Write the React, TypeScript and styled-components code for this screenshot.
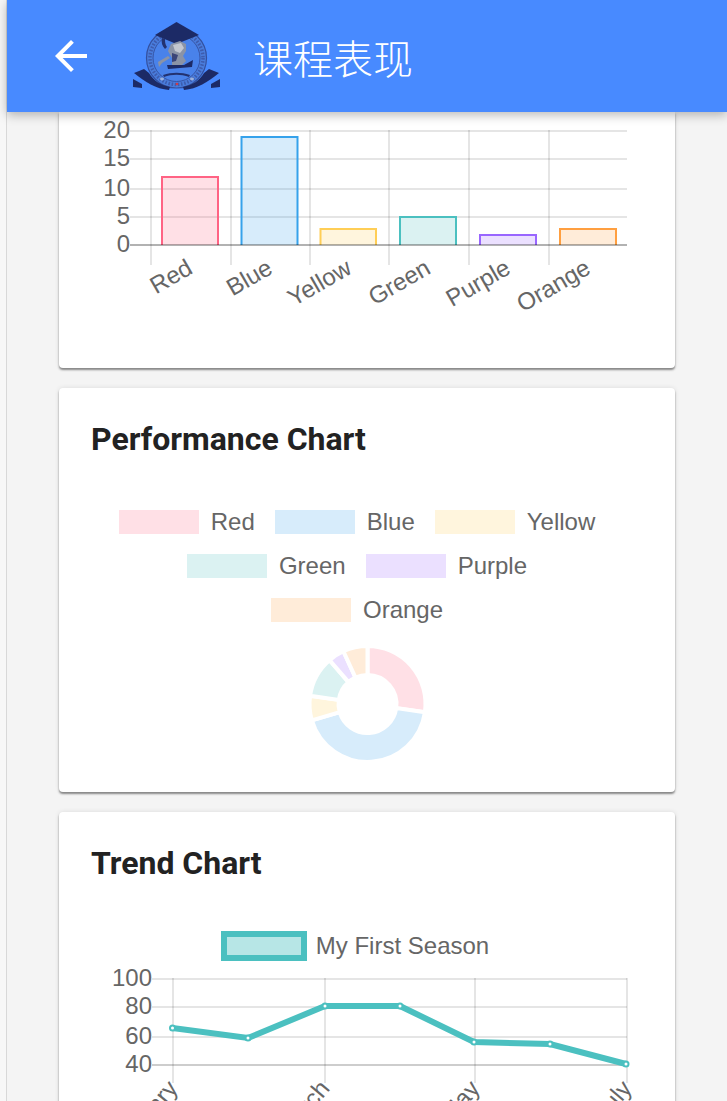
import { createGlobalStyle, styled } from 'styled-components';
import { MdArrowBack } from 'react-icons/md';

const GlobalStyle = createGlobalStyle`
  html, body {
    margin: 0;
    padding: 0;
    height: 1101px;
    overflow: hidden;
    background: #f4f4f4;
    font-family: Roboto, "Liberation Sans", sans-serif;
  }
`;

const Shell = styled.div`
  display: flex;
  height: 1101px;
  overflow: hidden;
`;

const Gutter = styled.div`
  width: 6px;
  flex: none;
  background: #f7f7f7;
  border-right: 1px solid #d8d8d8;
`;

const Page = styled.div`
  flex: 1;
  min-width: 0;
  display: flex;
  flex-direction: column;
`;

const Header = styled.header`
  flex: none;
  position: relative;
  z-index: 2;
  height: 112px;
  display: flex;
  align-items: center;
  background: #488aff;
  box-shadow: 0 3px 10px rgba(0, 0, 0, 0.28);
  color: #fff;
`;

const BackButton = styled.button`
  display: flex;
  padding: 0;
  margin-left: 40px;
  border: 0;
  background: none;
  color: #fff;
`;

const Logo = styled.svg`
  width: 92px;
  height: 74px;
  margin-left: 35px;
`;

const Title = styled.h1`
  margin: 2px 0 0 31px;
  font-family: "Noto Sans CJK SC", sans-serif;
  font-size: 40px;
  font-weight: 300;
  line-height: 1;
`;

const Content = styled.main`
  display: flex;
  flex-direction: column;
  gap: 20px;
  padding: 0 52px;
`;

const Card = styled.section`
  flex: none;
  background: #fff;
  border-radius: 4px;
  padding: 32px;
  box-shadow: 0 2px 2px rgba(0, 0, 0, 0.42), 0 0 5px rgba(0, 0, 0, 0.1);
`;

const TopCard = styled(Card)`
  padding-top: 0;
  border-radius: 0 0 4px 4px;
`;

const CardTitle = styled.h2`
  margin: 0;
  font-size: 32px;
  line-height: 38px;
  font-weight: 700;
  color: #222;
`;

const Chart = styled.svg`
  display: block;
  width: 552px;
  overflow: visible;
`;

const DoughnutFrame = styled(Chart)`
  margin-top: 12px;
`;

const LineFrame = styled(Chart)`
  margin-top: 4px;
`;

const ChartLabel = styled.text`
  font-family: "Liberation Sans", Arial, sans-serif;
  font-size: 24px;
  fill: #666;
`;

const Legend = styled.div`
  display: flex;
  flex-wrap: wrap;
  justify-content: center;
  width: 530px;
  margin: 42px auto 0;
`;

const LegendItem = styled.div`
  display: flex;
  align-items: center;
  height: 44px;
  margin-right: 20px;
  font-family: "Liberation Sans", Arial, sans-serif;
  font-size: 24px;
  color: #666;
`;

const Swatch = styled.span<{ $rgb: string }>`
  width: 80px;
  height: 24px;
  margin-right: 12px;
  background: rgba(${(p) => p.$rgb}, 0.2);
`;

const LineLegend = styled.div`
  display: flex;
  align-items: center;
  justify-content: center;
  gap: 9px;
  height: 30px;
  margin-top: 49px;
  padding-right: 24px;
  font-family: "Liberation Sans", Arial, sans-serif;
  font-size: 24px;
  color: #666;
`;

const LineSwatch = styled.span`
  box-sizing: border-box;
  width: 86px;
  height: 30px;
  border: 6px solid #4bc0c0;
  background: rgba(75, 192, 192, 0.4);
`;

const series = [
  { name: 'Red', rgb: '255, 99, 132', value: 12, x: 162, w: 56, top: 177 },
  { name: 'Blue', rgb: '54, 162, 235', value: 19, x: 241.5, w: 56, top: 137 },
  { name: 'Yellow', rgb: '255, 206, 86', value: 3, x: 320.5, w: 55.5, top: 229 },
  { name: 'Green', rgb: '75, 192, 192', value: 5, x: 400, w: 56, top: 217 },
  { name: 'Purple', rgb: '153, 102, 255', value: 2, x: 480, w: 56, top: 235 },
  { name: 'Orange', rgb: '255, 159, 64', value: 3, x: 560, w: 56, top: 229 },
];

const barGridX = [151, 231, 310, 389, 469, 549];
const barGridY = [131, 159, 189, 217];
const barTicks = [
  { label: '20', y: 132 },
  { label: '15', y: 160 },
  { label: '10', y: 190 },
  { label: '5', y: 218 },
  { label: '0', y: 246 },
];

const BarChart = () => (
  <Chart viewBox="91 112 552 224" height="224">
    {barGridY.map((y) => (
      <line key={y} x1="130" x2="627" y1={y} y2={y} stroke="rgba(0,0,0,0.1)" strokeWidth="2" />
    ))}
    {barGridX.map((x) => (
      <line key={x} x1={x} x2={x} y1="130" y2="265" stroke="rgba(0,0,0,0.1)" strokeWidth="2" />
    ))}
    {series.map((s) => (
      <g key={s.name}>
        <rect x={s.x} y={s.top} width={s.w} height={245 - s.top} fill={`rgba(${s.rgb},0.2)`} />
        <path
          d={`M${s.x} 245V${s.top}H${s.x + s.w}V245`}
          fill="none"
          stroke={`rgb(${s.rgb})`}
          strokeWidth="2"
        />
      </g>
    ))}
    <line x1="130" x2="627" y1="245" y2="245" stroke="rgba(0,0,0,0.3)" strokeWidth="2" />
    {barTicks.map((t) => (
      <ChartLabel key={t.label} x="130" y={t.y} textAnchor="end" dominantBaseline="middle">
        {t.label}
      </ChartLabel>
    ))}
    {series.map((s, i) => (
      <ChartLabel
        key={s.name}
        textAnchor="end"
        transform={`translate(${barGridX[i] + 40} 267) rotate(-30)`}
        dominantBaseline="middle"
      >
        {s.name}
      </ChartLabel>
    ))}
  </Chart>
);

const arcPath = (from: number, to: number, R: number, r: number, cx: number, cy: number) => {
  const pt = (a: number, rad: number) =>
    `${(cx + rad * Math.sin(a)).toFixed(2)} ${(cy - rad * Math.cos(a)).toFixed(2)}`;
  const large = to - from > Math.PI ? 1 : 0;
  return `M${pt(from, R)}A${R} ${R} 0 ${large} 1 ${pt(to, R)}L${pt(to, r)}A${r} ${r} 0 ${large} 0 ${pt(from, r)}Z`;
};

const DoughnutChart = () => {
  const total = series.reduce((sum, s) => sum + s.value, 0);
  let angle = 0;
  return (
    <DoughnutFrame viewBox="91 644 552 116" height="116">
      {series.map((s) => {
        const from = angle;
        angle += (s.value / total) * Math.PI * 2;
        return (
          <path
            key={s.name}
            d={arcPath(from, angle, 58, 29, 367.5, 704)}
            fill={`rgba(${s.rgb},0.2)`}
            stroke="#fff"
            strokeWidth="4"
          />
        );
      })}
    </DoughnutFrame>
  );
};

const linePoints = [
  [172.5, 1028],
  [248, 1038],
  [325, 1006],
  [400, 1006],
  [474, 1042],
  [550, 1044],
  [626, 1064],
];
const lineGridY = [979, 1007, 1037, 1065];
const lineGridX = [173, 325, 475, 627];
const lineTicks = [
  { label: '100', y: 980 },
  { label: '80', y: 1008 },
  { label: '60', y: 1038 },
  { label: '40', y: 1066 },
];
const months = ['January', 'March', 'May', 'July'];

const LineChart = () => (
  <LineFrame viewBox="91 965 552 136" height="136">
    {lineGridY.map((y) => (
      <line key={y} x1="152" x2="627" y1={y} y2={y} stroke="rgba(0,0,0,0.1)" strokeWidth="2" />
    ))}
    {lineGridX.map((x) => (
      <line key={x} x1={x} x2={x} y1="978" y2="1083" stroke="rgba(0,0,0,0.1)" strokeWidth="2" />
    ))}
    <line x1="152" x2="627" y1="1065" y2="1065" stroke="rgba(0,0,0,0.1)" strokeWidth="2" />
    <polyline
      points={linePoints.map((p) => p.join(',')).join(' ')}
      fill="none"
      stroke="#4bc0c0"
      strokeWidth="6"
    />
    {linePoints.map(([x, y]) => (
      <g key={x}>
        <circle cx={x} cy={y} r="3.5" fill="#4bc0c0" />
        <circle cx={x} cy={y} r="1.5" fill="#fff" />
      </g>
    ))}
    {lineTicks.map((t) => (
      <ChartLabel key={t.label} x="152" y={t.y} textAnchor="end" dominantBaseline="middle">
        {t.label}
      </ChartLabel>
    ))}
    {months.map((m, i) => (
      <ChartLabel
        key={m}
        textAnchor="end"
        transform={`translate(${lineGridX[i] + 1} 1085) rotate(-50)`}
        dominantBaseline="middle"
      >
        {m}
      </ChartLabel>
    ))}
  </LineFrame>
);

const CollegeLogo = () => (
  <Logo viewBox="130 18 92 74" aria-label="logo">
    <defs>
      <filter id="soft">
        <feGaussianBlur stdDeviation="0.5" />
      </filter>
    </defs>
    <g filter="url(#soft)">
      <circle cx="176.5" cy="57" r="30" fill="#4a7ddd" stroke="#33509f" strokeWidth="1.2" />
      <circle cx="176.5" cy="57" r="26.5" fill="none" stroke="#3d5cae" strokeWidth="3.5" strokeDasharray="1.6 1.6" />
      <circle cx="176.5" cy="57" r="23.5" fill="#4a82ea" stroke="#33509f" strokeWidth="0.9" />
      <path d="M176.5 21L199 34L176.5 43L155 34Z" fill="#1d2a66" />
      <path d="M162 37C161 41 162 45 165 48L167 46C165 43 165 41 165 38Z" fill="#24316f" />
      <path d="M171 43L180 40L186 43L186 50L183 55L186 60L182 64L172 64L172 57L168 50Z" fill="#8a93a6" />
      <path d="M173 44L181 42L184 47L180 52L175 50Z" fill="#c3c7d0" />
      <path d="M172 52L178 54L176 60L172 61Z" fill="#3b4478" />
      <path d="M158 61L168 55L170 57L162 62L159 66Z" fill="#8a93a6" />
      <path d="M167 64L184 64L193 59L192 66L168 68Z" fill="#1d2a66" />
      <path d="M163 74C172 71 181 71 190 74L189 76C181 73 172 73 164 76Z" fill="#24316f" />
      <ellipse cx="162" cy="78" rx="2" ry="1.4" fill="#9db2dc" />
      <ellipse cx="192" cy="78" rx="2" ry="1.4" fill="#9db2dc" />
      <path d="M134 72L144 68L149 72C153 79 160 84 170 86L169 89C156 88 145 81 134 72Z" fill="#1d2a66" />
      <path d="M219 72L209 68L204 72C200 79 193 84 183 86L184 89C197 88 208 81 219 72Z" fill="#1d2a66" />
      <path d="M133 78L142 83L142 87L133 86Z" fill="#1d2a66" />
      <path d="M220 78L211 83L211 87L220 86Z" fill="#1d2a66" />
      <circle cx="177" cy="83" r="1.3" fill="#d03a4a" />
    </g>
  </Logo>
);

export default function App() {
  return (
    <>
      <GlobalStyle />
      <Shell>
        <Gutter />
        <Page>
          <Header>
            <BackButton aria-label="back">
              <MdArrowBack size={48} />
            </BackButton>
            <CollegeLogo />
            <Title>课程表现</Title>
          </Header>
          <Content>
            <TopCard>
              <BarChart />
            </TopCard>
            <Card>
              <CardTitle>Performance Chart</CardTitle>
              <Legend>
                {series.map((s) => (
                  <LegendItem key={s.name}>
                    <Swatch $rgb={s.rgb} />
                    {s.name}
                  </LegendItem>
                ))}
              </Legend>
              <DoughnutChart />
            </Card>
            <Card>
              <CardTitle>Trend Chart</CardTitle>
              <LineLegend>
                <LineSwatch />
                My First Season
              </LineLegend>
              <LineChart />
            </Card>
          </Content>
        </Page>
      </Shell>
    </>
  );
}
